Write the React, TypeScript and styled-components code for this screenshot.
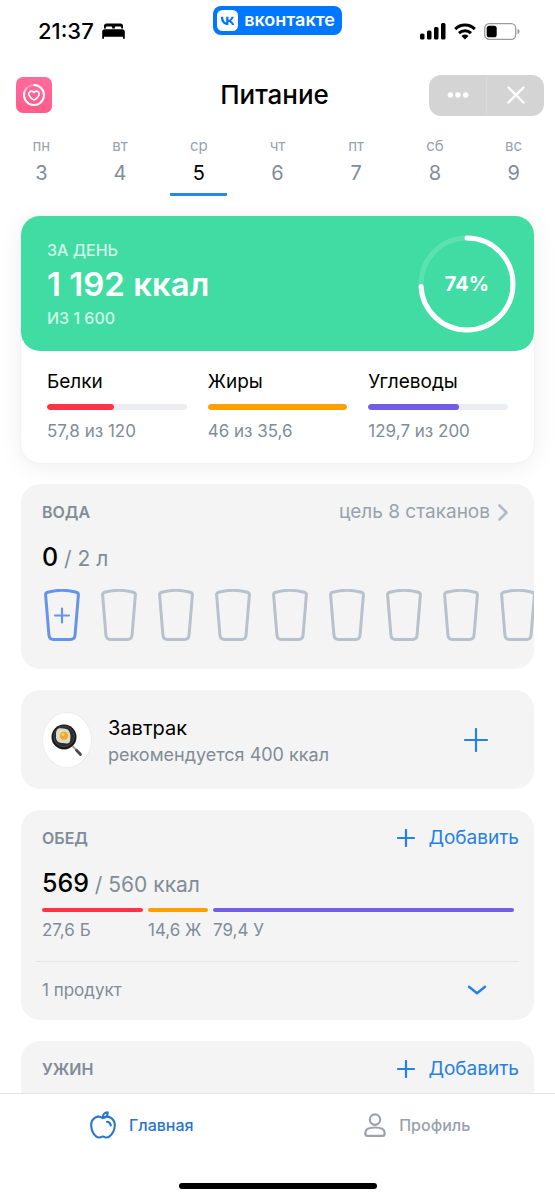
import React from 'react';
import styled, { createGlobalStyle } from 'styled-components';

const color = {
  text: '#000000',
  secondary: '#818c99',
  tertiary: '#99a2ad',
  accent: '#2680e6',
  card: '#f4f4f4',
  green: '#41dca3',
  red: '#ff3347',
  orange: '#ffa000',
  violet: '#735ce6',
  track: '#ebedf0',
};

const GlobalStyle = createGlobalStyle`
  *, *::before, *::after { box-sizing: border-box; }
  body {
    margin: 0;
    background: #fff;
    color: ${color.text};
    font-family: Inter, "Liberation Sans", sans-serif;
  }
  button {
    margin: 0;
    padding: 0;
    border: 0;
    background: none;
    color: inherit;
    font: inherit;
    cursor: pointer;
  }
  a { color: inherit; text-decoration: none; }
  h1, h2, p { margin: 0; font: inherit; }
  svg { display: block; flex: none; }
`;

const Screen = styled.div`
  display: flex;
  flex-direction: column;
  height: 100vh;
`;

/* Status bar */

const StatusBar = styled.div`
  display: grid;
  grid-template-columns: 1fr auto 1fr;
  padding: 6px 35px 0;
  height: 70px;
`;

const StatusSide = styled.div<{ $end?: boolean }>`
  display: flex;
  align-items: center;
  justify-content: ${(p) => (p.$end ? 'flex-end' : 'flex-start')};
  gap: 8px;
  height: 50px;
  padding-left: 3px;
`;

const Clock = styled.span`
  font-size: 22px;
  font-weight: 500;
  line-height: 28px;
`;

const VkBadge = styled.a`
  display: flex;
  align-items: center;
  gap: 6px;
  height: 29px;
  padding: 0 7px 1px 4px;
  border-radius: 8px;
  background: #0077ff;
  color: #fff;
  font-size: 18px;
  font-weight: 600;
  line-height: 24px;
`;

/* Header */

const Header = styled.header`
  display: grid;
  grid-template-columns: 1fr auto 1fr;
  align-items: center;
  height: 50px;
  padding: 0 11px 0 5px;
`;

const AppLogo = styled.a`
  display: flex;
  align-items: center;
  justify-content: center;
  width: 36px;
  height: 36px;
  margin-left: 11px;
  border-radius: 7px;
  background: linear-gradient(180deg, #ff6b9c, #ff5c8a);
`;

const Title = styled.h1`
  font-size: 26px;
  font-weight: 500;
  line-height: 32px;
`;

const Controls = styled.div`
  display: flex;
  justify-self: end;
  width: 115px;
  height: 41px;
  border-radius: 12px;
  background: #d4d4d4;
`;

const ControlButton = styled.button`
  display: flex;
  flex: 1;
  align-items: center;
  justify-content: center;
  & + & {
    border-left: 1px solid #dadada;
  }
`;

/* Week */

const Week = styled.nav`
  display: grid;
  grid-template-columns: repeat(7, 1fr);
  justify-items: center;
  height: 86px;
  padding: 16px 2px 10px;
`;

const Day = styled.button<{ $active?: boolean }>`
  display: flex;
  flex-direction: column;
  align-items: center;
  gap: 4px;
  width: 57px;
  height: 60px;
  border-bottom: 3px solid ${(p) => (p.$active ? '#2688eb' : 'transparent')};
  border-radius: 1px;
  color: ${(p) => (p.$active ? color.text : color.secondary)};
`;

const DayName = styled.span`
  color: ${color.tertiary};
  font-size: 15px;
  line-height: 20px;
`;

const DayNumber = styled.span`
  font-size: 20px;
  line-height: 26px;
`;

/* Content */

const Content = styled.main`
  display: flex;
  flex: 1;
  flex-direction: column;
  gap: 21px;
  min-height: 0;
  padding: 10px 21px 0;
  overflow-y: auto;
  scrollbar-width: none;
  & > * { flex: none; }
`;

const Summary = styled.section`
  border-radius: 19px;
  background: #fff;
  box-shadow: 0 4px 26px rgba(0, 0, 0, 0.07), 0 0 2px rgba(0, 0, 0, 0.07);
`;

const Total = styled.div`
  display: flex;
  align-items: center;
  justify-content: space-between;
  height: 135px;
  padding: 0 18px 0 26px;
  border-radius: 19px;
  background: ${color.green};
  color: #fff;
`;

const TotalCaption = styled.p`
  font-size: 16px;
  font-weight: 500;
  line-height: 24px;
  opacity: 0.76;
`;

const TotalValue = styled.p`
  font-size: 33px;
  font-weight: 600;
  line-height: 44px;
`;

const Ring = styled.div`
  position: relative;
  display: flex;
  align-items: center;
  justify-content: center;
  width: 98px;
  height: 98px;
  font-size: 20px;
  font-weight: 700;
  svg {
    position: absolute;
    inset: 0;
  }
`;

const Macros = styled.div`
  display: grid;
  grid-template-columns: repeat(3, 1fr);
  gap: 21px;
  height: 112px;
  padding: 18px 26px 0;
`;

const MacroName = styled.p`
  font-size: 19px;
  line-height: 26px;
`;

const Track = styled.div`
  height: 6px;
  margin: 9px 0;
  border-radius: 3px;
  background: ${color.track};
  overflow: hidden;
`;

const Fill = styled.div<{ $color: string }>`
  height: 100%;
  border-radius: 3px;
  background: ${(p) => p.$color};
`;

const Note = styled.p`
  color: ${color.secondary};
  font-size: 17px;
  line-height: 24px;
`;

const Card = styled.section`
  padding: 14px 15px 0 21px;
  border-radius: 19px;
  background: ${color.card};
  overflow: hidden;
`;

const WaterCard = styled(Card)`
  padding-bottom: 26px;
`;

const LunchCard = styled(Card)`
  padding-bottom: 13px;
`;

const DinnerCard = styled(Card)`
  padding-bottom: 24px;
`;

const CardHead = styled.div`
  display: flex;
  align-items: center;
  justify-content: space-between;
  height: 28px;
`;

const CardTitle = styled.h2`
  color: ${color.secondary};
  font-size: 16px;
  font-weight: 600;
  line-height: 24px;
`;

const GoalLink = styled.a`
  display: flex;
  align-items: center;
  gap: 8px;
  padding-right: 11px;
  color: ${color.tertiary};
  font-size: 19px;
  line-height: 26px;
`;

const Amount = styled.p`
  padding-top: 15px;
  color: ${color.secondary};
  font-size: 21px;
  line-height: 32px;
  strong {
    color: ${color.text};
    font-size: 25px;
    font-weight: 500;
  }
`;

const Glasses = styled.div`
  display: flex;
  gap: 21px;
  margin-right: -15px;
  padding: 14px 0 2px 2px;
  overflow: hidden;
`;

const Glass = styled.button<{ $next?: boolean }>`
  flex: none;
  color: ${(p) => (p.$next ? '#6793e8' : '#b8c1cc')};
`;

const MealCard = styled(Card)`
  display: flex;
  align-items: center;
  height: 99px;
  padding: 0 46px 0 21px;
`;

const MealImage = styled.div`
  display: flex;
  align-items: center;
  justify-content: center;
  width: 50px;
  height: 56px;
  border: 1px solid #ededed;
  border-radius: 50%;
  background: #fff;
`;

const MealText = styled.div`
  flex: 1;
  padding: 2px 0 0 16px;
`;

const MealName = styled.h2`
  font-size: 20px;
  line-height: 28px;
`;

const MealNote = styled.p`
  color: ${color.secondary};
  font-size: 18px;
  line-height: 26px;
`;

const IconButton = styled.button`
  color: ${color.accent};
`;

const AddButton = styled.button`
  display: flex;
  align-items: center;
  gap: 13px;
  color: ${color.accent};
  font-size: 19px;
  line-height: 26px;
`;

const Split = styled.div`
  display: grid;
  grid-template-columns: 101fr 60fr 301fr;
  gap: 5px;
  padding: 7px 5px 19px 0;
`;

const PartCell = styled.div`
  min-width: 0;
  white-space: nowrap;
`;

const PartBar = styled.div<{ $color: string }>`
  height: 4px;
  margin-bottom: 6px;
  border-radius: 2px;
  background: ${(p) => p.$color};
`;

const Products = styled.button`
  display: flex;
  align-items: center;
  justify-content: space-between;
  width: calc(100% + 6px);
  height: 46px;
  margin-left: -6px;
  padding: 11px 32px 0 6px;
  border-top: 1px solid #e4e5e7;
  color: ${color.accent};
  text-align: left;
`;

/* Tab bar */

const TabBar = styled.nav`
  display: grid;
  grid-template-columns: 1fr 1fr;
  height: 63px;
  padding-left: 4px;
  border-top: 1px solid #e6e6e6;
  background: #fff;
`;

const Tab = styled.a<{ $active?: boolean }>`
  display: flex;
  align-items: center;
  justify-content: center;
  gap: 13px;
  color: ${(p) => (p.$active ? '#2975cc' : color.tertiary)};
  font-size: 16px;
  font-weight: 500;
`;

const HomeArea = styled.div`
  display: flex;
  justify-content: center;
  height: 44px;
  padding-top: 27px;
  background: #fff;
`;

const HomeIndicator = styled.div`
  width: 198px;
  height: 6px;
  border-radius: 3px;
  background: #000;
`;

/* Icons */

const BedIcon = () => (
  <svg width="23" height="16" viewBox="0 0 23 16" fill="currentColor" aria-hidden="true">
    <path d="M2 5.5V3a2.6 2.6 0 0 1 2.6-2.6h13.8A2.6 2.6 0 0 1 21 3v2.5h-1.8V4.6a1 1 0 0 0-1-1h-4.4a1 1 0 0 0-1 1v.9h-2.6v-.9a1 1 0 0 0-1-1H4.8a1 1 0 0 0-1 1v.9z" />
    <path d="M3 6.300h17a2.800 2.800 0 0 1 2.800 2.800v6a.9.9 0 0 1-1.800 0v-1.300H2v1.300a.9.9 0 0 1-1.800 0v-6A2.800 2.800 0 0 1 3 6.300z" />
  </svg>
);

const VkIcon = () => (
  <svg width="21" height="21" viewBox="0 0 21 21" aria-hidden="true">
    <rect width="21" height="21" rx="5.5" fill="#fff" />
    <path
      fill="#0077ff"
      d="M11.100 15C6.500 15 3.900 11.900 3.800 6.700h2.300c.1 3.800 1.800 5.400 3.100 5.800V6.700h2.200V10c1.300-.1 2.700-1.600 3.200-3.300h2.100c-.3 2-1.800 3.500-2.900 4.100 1.100.5 2.800 1.800 3.400 4.200h-2.300c-.5-1.500-1.700-2.700-3.500-2.900V15z"
    />
  </svg>
);

const SignalIcon = () => (
  <svg width="26" height="17" viewBox="0 0 26 17" aria-hidden="true">
    <rect x="0" y="10.500" width="4.500" height="6" rx="1.500" />
    <rect x="7" y="7.500" width="4.500" height="9" rx="1.500" />
    <rect x="14" y="4" width="4.500" height="12.500" rx="1.500" />
    <rect x="21" y="0" width="4.500" height="16.500" rx="1.500" />
  </svg>
);

const WifiIcon = () => (
  <svg width="22" height="17" viewBox="0 0 22 17" fill="none" stroke="#000" strokeWidth="3" aria-hidden="true">
    <path d="M1.200 6.100a14 14 0 0 1 19.600 0" />
    <path d="M5 10.200a8.700 8.700 0 0 1 12 0" />
    <path d="M11 16.500 7.500 13a5 5 0 0 1 7 0z" fill="#000" stroke="none" />
  </svg>
);

const BatteryIcon = () => (
  <svg width="36" height="17" viewBox="0 0 36 17" aria-hidden="true">
    <rect x=".7" y=".7" width="31" height="15.600" rx="4.600" fill="none" stroke="#9a9a9a" strokeWidth="1.300" />
    <rect x="2.700" y="2.700" width="10" height="11.600" rx="2.600" />
    <path d="M33.500 5.800c1.300.5 2 1.500 2 2.700s-.7 2.200-2 2.700z" fill="#9a9a9a" />
  </svg>
);

const HeartRingIcon = () => (
  <svg width="24" height="24" viewBox="0 0 24 24" fill="none" stroke="#fff" strokeLinecap="round" aria-hidden="true">
    <circle cx="12" cy="12" r="10" strokeWidth="1.800" opacity=".3" />
    <path d="M12 2a10 10 0 1 1-9.700 7.500" strokeWidth="1.900" />
    <path d="M4.500 5.400A10 10 0 0 0 2.300 9.500" strokeWidth="1.700" opacity=".5" />
    <path
      d="M12 17c-.6 0-5.200-3-5.200-6a2.700 2.700 0 0 1 2.700-2.800c1.100 0 2 .6 2.500 1.400.5-.8 1.400-1.400 2.500-1.400a2.700 2.700 0 0 1 2.700 2.800c0 3-4.600 6-5.200 6z"
      strokeWidth="1.700"
      strokeLinejoin="round"
    />
  </svg>
);

const DotsIcon = () => (
  <svg width="22" height="6" viewBox="0 0 22 6" fill="#fff" aria-hidden="true">
    <circle cx="3.300" cy="3" r="2.700" />
    <circle cx="11" cy="3" r="2.700" />
    <circle cx="18.700" cy="3" r="2.700" />
  </svg>
);

const CloseIcon = () => (
  <svg width="18" height="18" viewBox="0 0 18 18" stroke="#fff" strokeWidth="2.400" strokeLinecap="round" aria-hidden="true">
    <path d="M1.500 1.500l15 15M16.500 1.500l-15 15" />
  </svg>
);

const PlusIcon = ({ size }: { size: number }) => (
  <svg width={size} height={size} viewBox={`0 0 ${size} ${size}`} stroke="currentColor" strokeWidth="2.200" strokeLinecap="round" aria-hidden="true">
    <path d={`M${size / 2} 1v${size - 2}M1 ${size / 2}h${size - 2}`} />
  </svg>
);

const ChevronRight = () => (
  <svg width="10" height="18" viewBox="0 0 10 18" fill="none" stroke="#b0b9c4" strokeWidth="2.600" strokeLinecap="round" strokeLinejoin="round" aria-hidden="true">
    <path d="M1.500 2.500 8.500 9.500l-7 7" />
  </svg>
);

const ChevronDown = () => (
  <svg width="20" height="10" viewBox="0 0 20 10" fill="none" stroke="currentColor" strokeWidth="2.400" strokeLinecap="round" strokeLinejoin="round" aria-hidden="true">
    <path d="M2 1.700 10 8.300l8-6.600" />
  </svg>
);

const GlassIcon = ({ plus }: { plus?: boolean }) => (
  <svg width="36" height="52" viewBox="0 0 36 52" fill="none" stroke="currentColor" strokeWidth="3" strokeLinejoin="round" aria-hidden="true">
    <path d="M3.700 3.200C12 1 24 1 32.300 3.200c1.400.4 2.200 1.300 2.100 2.700l-3.300 40c-.3 3-1.900 4.600-4.500 4.600H9.400c-2.600 0-4.200-1.600-4.500-4.600l-3.300-40C1.500 4.500 2.300 3.600 3.700 3.200z" />
    {plus && <path d="M18 19.500v14M11 26.500h14" strokeWidth="2.200" strokeLinecap="round" />}
  </svg>
);

const FryingPan = () => (
  <svg width="32" height="34" viewBox="0 0 32 34" aria-hidden="true">
    <path d="M21.500 23l7.500 8" stroke="#a5a5a8" strokeWidth="2" />
    <path d="M25.500 27.300l4 4.200" stroke="#4a4a4e" strokeWidth="2.800" strokeLinecap="round" />
    <circle cx="13" cy="14" r="12.500" fill="#19191b" />
    <circle cx="13" cy="13.500" r="10.300" fill="#2c2c2f" stroke="#515256" strokeWidth=".8" />
    <path d="M6 7c1.500-2.300 4.200-1.600 6-1.500 2.800.2 5.600.6 6.400 3.300.5 1.800 1.300 3 1 5.400-.3 2.300.3 5.200-2.200 6-2.200.8-3.700-.3-5.600-.3-2.800.1-5-.7-6-2.800-.8-1.700-.6-3-.6-4.800C5 10.300 4.800 8.700 6 7z" fill="#d9dcc6" />
    <circle cx="13" cy="12.800" r="4" fill="#f5a623" />
    <circle cx="12" cy="11.500" r="1.500" fill="#ffd768" />
  </svg>
);

const AppleIcon = () => (
  <svg width="26" height="28" viewBox="0 0 26 28" fill="none" stroke="currentColor" strokeWidth="2.100" strokeLinecap="round" strokeLinejoin="round" aria-hidden="true">
    <path d="M12.800 7.100C10.500 5.500 7.300 5.200 4.800 6.800 2 8.600 1.100 11.400 1.200 14.500c.2 4.300 2.100 8.700 4.900 10.900 1.500 1.200 3.300 1.400 4.700.7 1.300-.7 2.700-.7 4 0 1.400.7 3.200.5 4.700-.7 2.800-2.200 5.100-6.600 5.300-10.900.1-3.100-1.100-5.900-3.900-7.700-2.500-1.600-5.800-1.300-8.100.3z" />
    <path d="M12.900 6.800c-.3-3.300 1.500-5.400 4.800-5.400.2 3.100-1.500 5.300-4.800 5.400z" />
    <path d="M17 10.800c2 .1 3.500 1.500 3.800 3.700" />
  </svg>
);

const PersonIcon = () => (
  <svg width="22" height="24" viewBox="0 0 22 24" fill="none" stroke="currentColor" strokeWidth="2.200" aria-hidden="true">
    <circle cx="11" cy="6.600" r="5.200" />
    <path d="M1.400 19.700c0-3.300 4-5.200 9.600-5.200s9.600 1.900 9.600 5.200v1.200c0 1.200-.7 1.900-1.900 1.900H3.300c-1.200 0-1.900-.7-1.900-1.900z" />
  </svg>
);

/* Data */

const days = [
  ['пн', 3],
  ['вт', 4],
  ['ср', 5],
  ['чт', 6],
  ['пт', 7],
  ['сб', 8],
  ['вс', 9],
] as const;

const macros = [
  { name: 'Белки', note: '57,8 из 120', share: 48, color: color.red },
  { name: 'Жиры', note: '46 из 35,6', share: 100, color: color.orange },
  { name: 'Углеводы', note: '129,7 из 200', share: 65, color: color.violet },
];

const lunchParts = [
  { label: '27,6 Б', color: color.red },
  { label: '14,6 Ж', color: color.orange },
  { label: '79,4 У', color: color.violet },
];

const RING_RADIUS = 46;
const RING_LENGTH = 2 * Math.PI * RING_RADIUS;

export default function App() {
  return (
    <Screen>
      <GlobalStyle />
      <StatusBar>
        <StatusSide>
          <Clock>21:37</Clock>
          <BedIcon />
        </StatusSide>
        <VkBadge href="#vk">
          <VkIcon />
          вконтакте
        </VkBadge>
        <StatusSide $end>
          <SignalIcon />
          <WifiIcon />
          <BatteryIcon />
        </StatusSide>
      </StatusBar>

      <Header>
        <AppLogo href="#health" aria-label="Здоровье">
          <HeartRingIcon />
        </AppLogo>
        <Title>Питание</Title>
        <Controls>
          <ControlButton aria-label="Меню">
            <DotsIcon />
          </ControlButton>
          <ControlButton aria-label="Закрыть">
            <CloseIcon />
          </ControlButton>
        </Controls>
      </Header>

      <Week aria-label="Дни недели">
        {days.map(([name, number]) => (
          <Day key={number} $active={number === 5}>
            <DayName>{name}</DayName>
            <DayNumber>{number}</DayNumber>
          </Day>
        ))}
      </Week>

      <Content>
        <Summary>
          <Total>
            <div>
              <TotalCaption>ЗА ДЕНЬ</TotalCaption>
              <TotalValue>1 192 ккал</TotalValue>
              <TotalCaption>ИЗ 1 600</TotalCaption>
            </div>
            <Ring>
              <svg width="98" height="98" viewBox="0 0 98 98" fill="none" stroke="#fff" strokeWidth="5" aria-hidden="true">
                <circle cx="49" cy="49" r={RING_RADIUS} opacity=".15" />
                <circle
                  cx="49"
                  cy="49"
                  r={RING_RADIUS}
                  strokeLinecap="round"
                  strokeDasharray={`${RING_LENGTH * 0.74} ${RING_LENGTH}`}
                  transform="rotate(-90 49 49)"
                />
              </svg>
              74%
            </Ring>
          </Total>
          <Macros>
            {macros.map((m) => (
              <div key={m.name}>
                <MacroName>{m.name}</MacroName>
                <Track>
                  <Fill $color={m.color} style={{ width: `${m.share}%` }} />
                </Track>
                <Note>{m.note}</Note>
              </div>
            ))}
          </Macros>
        </Summary>

        <WaterCard>
          <CardHead>
            <CardTitle>ВОДА</CardTitle>
            <GoalLink href="#goal">
              цель 8 стаканов
              <ChevronRight />
            </GoalLink>
          </CardHead>
          <Amount>
            <strong>0</strong> / 2 л
          </Amount>
          <Glasses>
            {Array.from({ length: 9 }, (_, i) => (
              <Glass key={i} $next={i === 0} aria-label={`Стакан ${i + 1}`}>
                <GlassIcon plus={i === 0} />
              </Glass>
            ))}
          </Glasses>
        </WaterCard>

        <MealCard>
          <MealImage>
            <FryingPan />
          </MealImage>
          <MealText>
            <MealName>Завтрак</MealName>
            <MealNote>рекомендуется 400 ккал</MealNote>
          </MealText>
          <IconButton aria-label="Добавить завтрак">
            <PlusIcon size={24} />
          </IconButton>
        </MealCard>

        <LunchCard>
          <CardHead>
            <CardTitle>ОБЕД</CardTitle>
            <AddButton>
              <PlusIcon size={18} />
              Добавить
            </AddButton>
          </CardHead>
          <Amount>
            <strong>569</strong> / 560 ккал
          </Amount>
          <Split>
            {lunchParts.map((p) => (
              <PartCell key={p.label}>
                <PartBar $color={p.color} />
                <Note>{p.label}</Note>
              </PartCell>
            ))}
          </Split>
          <Products aria-expanded="false">
            <Note as="span">1 продукт</Note>
            <ChevronDown />
          </Products>
        </LunchCard>

        <DinnerCard>
          <CardHead>
            <CardTitle>УЖИН</CardTitle>
            <AddButton>
              <PlusIcon size={18} />
              Добавить
            </AddButton>
          </CardHead>
        </DinnerCard>
      </Content>

      <TabBar>
        <Tab href="#home" $active>
          <AppleIcon />
          Главная
        </Tab>
        <Tab href="#profile">
          <PersonIcon />
          Профиль
        </Tab>
      </TabBar>
      <HomeArea>
        <HomeIndicator />
      </HomeArea>
    </Screen>
  );
}
